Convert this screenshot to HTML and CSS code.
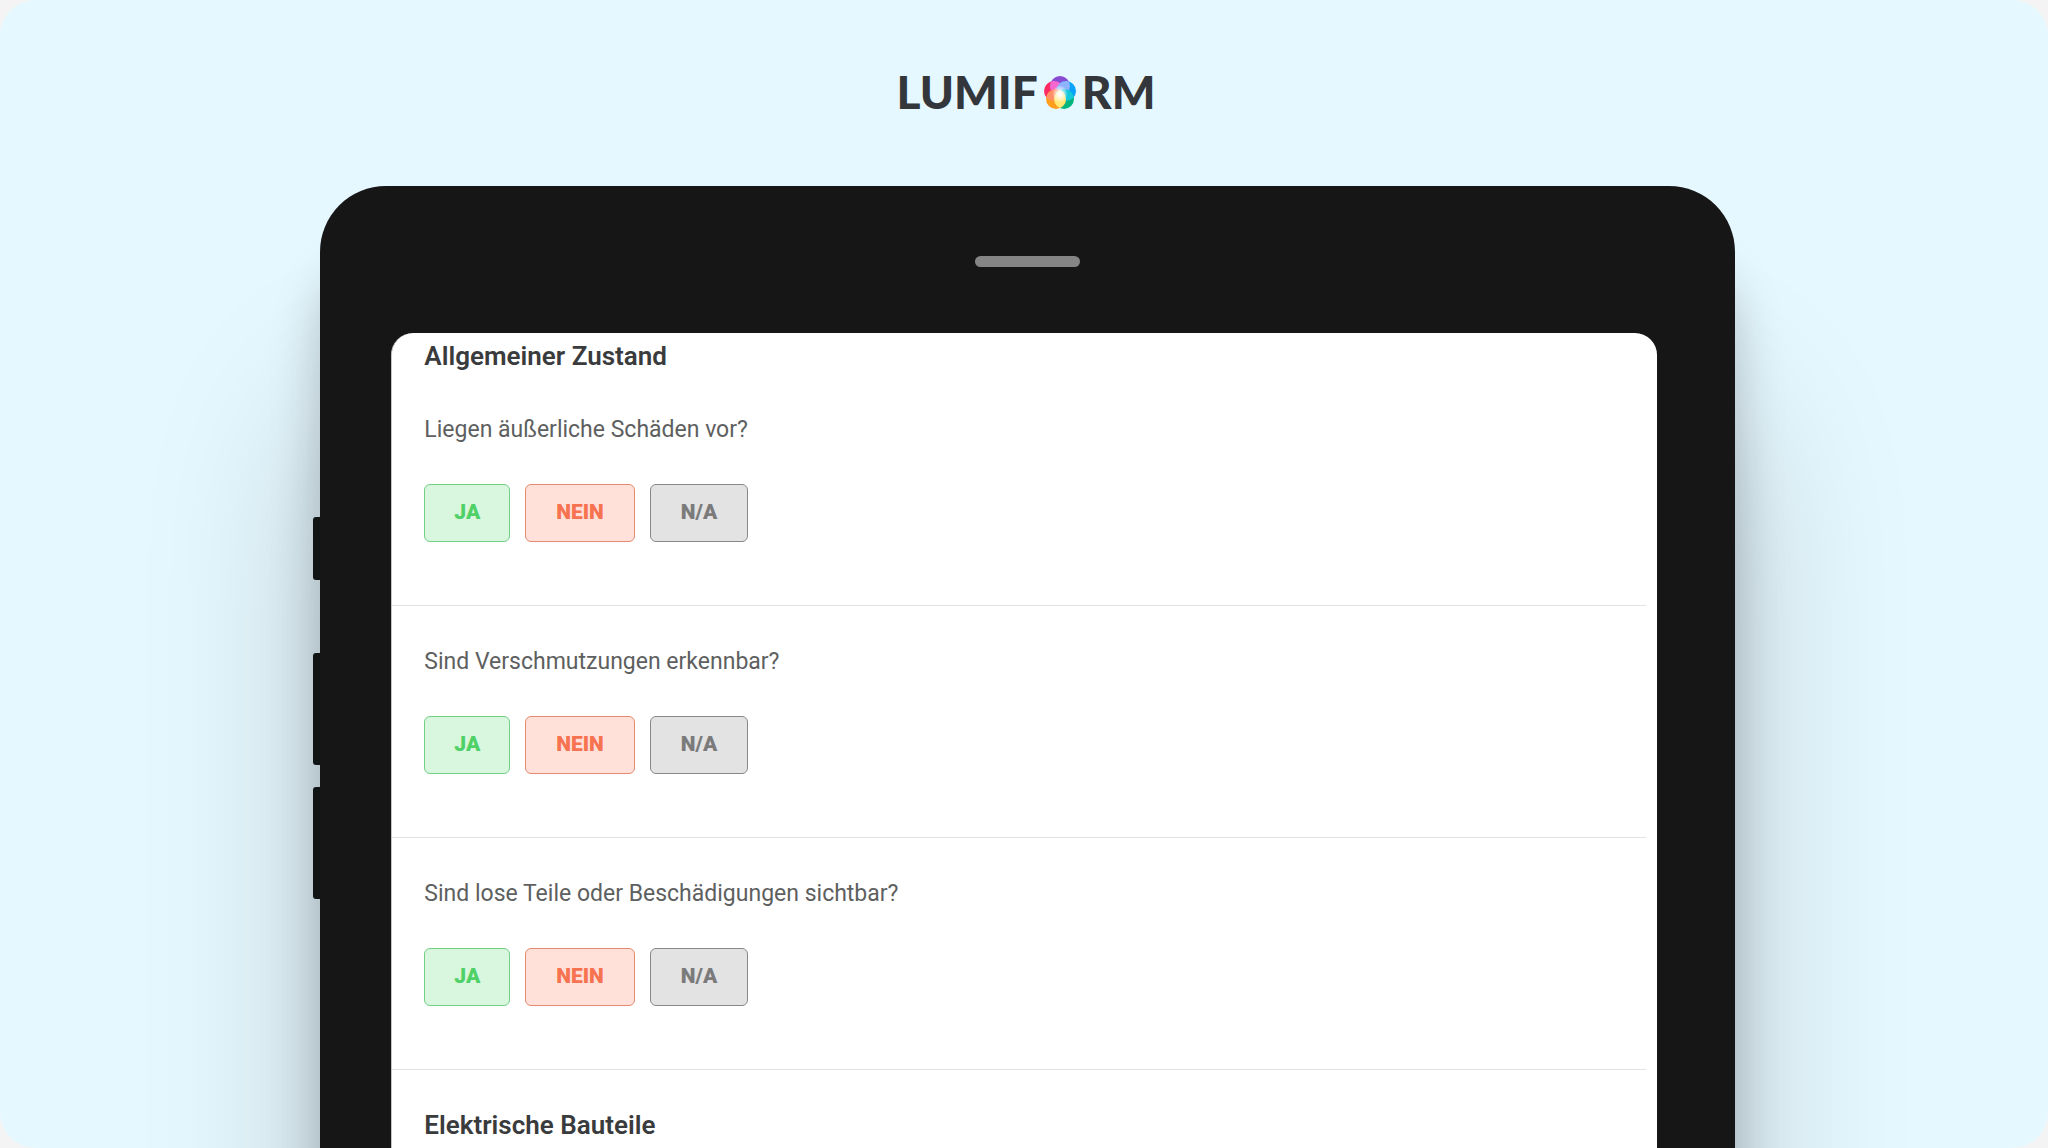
FILE: index.html
```html
<!DOCTYPE html>
<html lang="de">
<head>
<meta charset="utf-8">
<meta name="viewport" content="width=device-width, initial-scale=1">
<title>Lumiform</title>
<link rel="stylesheet" href="styles.css">
</head>
<body>
<div class="stage">
  <header class="brand">
    <span>LUMIF</span>
    <svg class="brand-mark" viewBox="0 0 32 33" role="img" aria-label="O">
      <defs>
        <radialGradient id="glow">
          <stop offset="0.2" stop-color="#fff" stop-opacity="0.95"/>
          <stop offset="1" stop-color="#fff" stop-opacity="0.2"/>
        </radialGradient>
        <clipPath id="top"><circle cx="16" cy="10" r="10"/></clipPath>
        <clipPath id="left"><circle cx="10" cy="15" r="10"/></clipPath>
        <clipPath id="right"><circle cx="22" cy="15" r="10"/></clipPath>
        <clipPath id="low"><circle cx="12" cy="23" r="10"/></clipPath>
      </defs>
      <circle cx="10" cy="15" r="10" fill="#ff2a62"/>
      <circle cx="16" cy="10" r="10" fill="#8a4bd3"/>
      <circle cx="22" cy="15" r="10" fill="#0aa2ff"/>
      <circle cx="20" cy="23" r="10" fill="#00b67e"/>
      <circle cx="12" cy="23" r="10" fill="#ff9d1e"/>
      <circle cx="10" cy="15" r="10" fill="#f767cf" clip-path="url(#top)"/>
      <circle cx="22" cy="15" r="10" fill="#8fb4ff" clip-path="url(#top)"/>
      <circle cx="12" cy="23" r="10" fill="#ff8f67" clip-path="url(#left)"/>
      <circle cx="20" cy="23" r="10" fill="#16c8dc" clip-path="url(#right)"/>
      <circle cx="20" cy="23" r="10" fill="#ffe876" clip-path="url(#low)"/>
      <ellipse cx="16" cy="18" rx="7" ry="8" fill="url(#glow)"/>
    </svg>
    <span>RM</span>
  </header>

  <div class="device">
    <div class="keys">
      <div class="key key-short"></div>
      <div class="key"></div>
      <div class="key"></div>
    </div>
    <div class="tablet">
      <div class="speaker"></div>
      <main class="screen">
        <h2 class="section-title">Allgemeiner Zustand</h2>
        <section class="question">
          <p class="prompt" id="q1">Liegen äußerliche Schäden vor?</p>
          <div class="answers" role="group" aria-labelledby="q1">
            <button class="answer yes" type="button">JA</button>
            <button class="answer no" type="button">NEIN</button>
            <button class="answer na" type="button">N/A</button>
          </div>
        </section>
        <section class="question">
          <p class="prompt" id="q2">Sind Verschmutzungen erkennbar?</p>
          <div class="answers" role="group" aria-labelledby="q2">
            <button class="answer yes" type="button">JA</button>
            <button class="answer no" type="button">NEIN</button>
            <button class="answer na" type="button">N/A</button>
          </div>
        </section>
        <section class="question">
          <p class="prompt" id="q3">Sind lose Teile oder Beschädigungen sichtbar?</p>
          <div class="answers" role="group" aria-labelledby="q3">
            <button class="answer yes" type="button">JA</button>
            <button class="answer no" type="button">NEIN</button>
            <button class="answer na" type="button">N/A</button>
          </div>
        </section>
        <h2 class="section-title next">Elektrische Bauteile</h2>
      </main>
    </div>
  </div>
</div>
</body>
</html>
```
FILE: styles.css
```css
* {
  box-sizing: border-box;
}

body {
  margin: 0;
  background: #f4f4f4;
  font-family: Roboto, "Liberation Sans", sans-serif;
}

.stage {
  display: flex;
  flex-direction: column;
  align-items: center;
  height: 100vh;
  overflow: hidden;
  border-radius: 36px;
  background: #e6f8ff;
}

.brand {
  display: flex;
  flex: none;
  align-items: center;
  gap: 6px;
  height: 186px;
  padding: 0 0 2px 4px;
  color: #33363a;
  font-family: Lato, sans-serif;
  font-size: 46px;
  font-weight: 900;
  line-height: 48px;
}

.brand-mark {
  width: 32px;
  height: 33px;
}

.device {
  display: flex;
  flex: 1 0 auto;
  width: 69.4%;
}

.keys {
  position: relative;
  z-index: 1;
  display: flex;
  flex: none;
  flex-direction: column;
  gap: 22px;
  width: 7px;
  padding-top: 331px;
}

.key {
  height: 112px;
  border-radius: 3px 0 0 3px;
  background: #101415;
}

.key-short {
  height: 63px;
  margin-bottom: 51px;
}

.tablet {
  display: flex;
  flex: 1;
  flex-direction: column;
  padding-top: 70px;
  border-radius: 66px 66px 0 0;
  background: #161616;
  box-shadow: 0 80px 50px rgba(0, 0, 0, 0.22), 0 220px 180px rgba(0, 0, 0, 0.2);
}

.speaker {
  align-self: center;
  width: 105px;
  height: 11px;
  margin-bottom: 66px;
  border-radius: 6px;
  background: #858585;
}

.screen {
  flex: 1;
  margin: 0 78px 0 71px;
  padding: 5px 11px 0 0;
  border-left: 1px solid #c4c4c4;
  border-radius: 22px 22px 0 0;
  background: #fff;
}

.section-title {
  margin: 0 0 0 32px;
  color: #3a3b3c;
  font-size: 26px;
  font-weight: 600;
  line-height: 36px;
}

.question {
  height: 232px;
  padding: 41px 0 0 32px;
  border-bottom: 1px solid #e2e2e2;
}

.prompt {
  margin: 0 0 39px;
  color: #5e5f60;
  font-size: 23px;
  line-height: 30px;
}

.answers {
  display: flex;
  gap: 15px;
}

.answer {
  height: 58px;
  padding: 0 29px 2px;
  border: 1px solid;
  border-radius: 6px;
  font: 900 21px/24px Roboto, "Liberation Sans", sans-serif;
}

.yes {
  border-color: #72cf84;
  background: #d9f7df;
  color: #4fd167;
}

.no {
  padding: 0 30px 2px;
  border-color: #e58a70;
  background: #ffe1da;
  color: #f67250;
}

.na {
  padding: 0 30px 2px;
  border-color: #888;
  background: #e3e3e3;
  color: #7b7b7b;
}

.next {
  margin-top: 37px;
}
```
